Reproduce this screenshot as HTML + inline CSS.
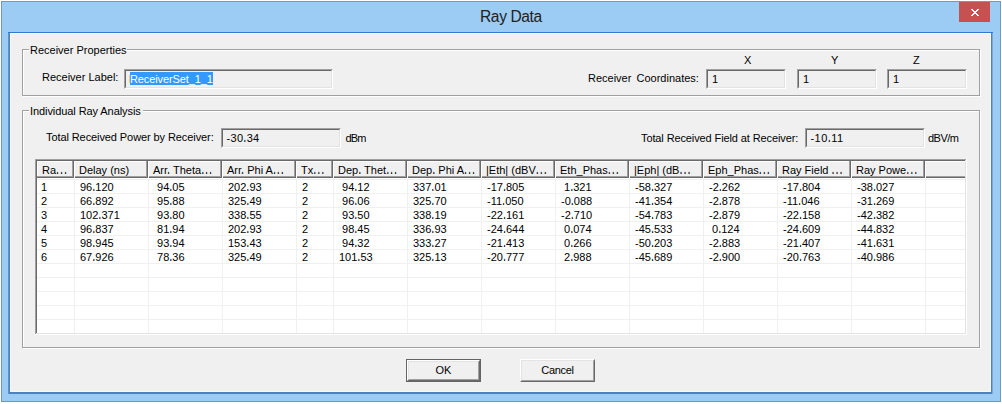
<!DOCTYPE html>
<html><head><meta charset="utf-8">
<style>
*{margin:0;padding:0;box-sizing:border-box}
html,body{width:1002px;height:404px;overflow:hidden;background:#fff}
body{position:relative;font-family:"Liberation Sans",sans-serif;font-size:11px;color:#000}
.a{position:absolute}
.t{position:absolute;white-space:pre;line-height:13px;height:13px}
#frame{left:1px;top:1px;width:1000px;height:401px;background:#9ccbf3;border:1px solid #7198bd}
#client{left:8px;top:32px;width:985px;height:362px;background:#4e82bb;border-left:1px solid #5f92c8;border-right:1px solid #78a9dc}
#ctop{left:8px;top:32px;width:985px;height:1px;background:#2e7ad2}
#cin{left:10px;top:33px;width:981px;height:359px;background:#fbf8f4}
#cbg{left:11px;top:34px;width:979px;height:357px;background:#f0f0f0}
#title{left:480px;top:7px;font-size:15.6px;line-height:19px;color:#222;white-space:pre;letter-spacing:-0.4px}
#close{left:959px;top:2px;width:31px;height:20px;background:#c75050;overflow:hidden}
.grp{position:absolute;border:1px solid #a0a0a0;box-shadow:1px 1px 0 #fff, inset 1px 1px 0 #fff}
.glab{position:absolute;background:#f0f0f0;padding:0 2px 0 2px}
.edit{position:absolute;background:#f0f0f0;border-style:solid;border-width:1px;border-color:#a0a0a0 #fff #fff #a0a0a0}
.edit::before{content:"";position:absolute;left:0;top:0;right:0;bottom:0;border-style:solid;border-width:1px;border-color:#696969 #e3e3e3 #e3e3e3 #696969}
.btn{position:absolute;background:#f0f0f0;border-style:solid;border-width:1px;border-color:#fff #696969 #696969 #fff}
.btn::before{content:"";position:absolute;left:0;top:0;right:0;bottom:0;border-style:solid;border-width:1px;border-color:#e3e3e3 #a0a0a0 #a0a0a0 #e3e3e3}
.el{letter-spacing:0.94px;text-shadow:0 -1px 0 rgba(0,0,0,.8)}
.p{text-shadow:0 -1px 0 rgba(0,0,0,.8)}
</style></head><body>
<div id="frame" class="a"></div>
<div id="client" class="a"></div>
<div id="ctop" class="a"></div>
<div id="cin" class="a"></div>
<div id="cbg" class="a"></div>
<div id="title" class="a">Ray Data</div>
<div id="close" class="a"><svg width="32" height="20" style="position:absolute;left:0;top:0" shape-rendering="crispEdges"><g fill="#fff"><rect x="12" y="7" width="1" height="1"/><rect x="13" y="7" width="1" height="1"/><rect x="18" y="7" width="1" height="1"/><rect x="19" y="7" width="1" height="1"/><rect x="13" y="8" width="1" height="1"/><rect x="14" y="8" width="1" height="1"/><rect x="17" y="8" width="1" height="1"/><rect x="18" y="8" width="1" height="1"/><rect x="14" y="9" width="1" height="1"/><rect x="15" y="9" width="1" height="1"/><rect x="16" y="9" width="1" height="1"/><rect x="17" y="9" width="1" height="1"/><rect x="15" y="10" width="1" height="1"/><rect x="16" y="10" width="1" height="1"/><rect x="14" y="11" width="1" height="1"/><rect x="15" y="11" width="1" height="1"/><rect x="16" y="11" width="1" height="1"/><rect x="17" y="11" width="1" height="1"/><rect x="13" y="12" width="1" height="1"/><rect x="14" y="12" width="1" height="1"/><rect x="17" y="12" width="1" height="1"/><rect x="18" y="12" width="1" height="1"/><rect x="12" y="13" width="1" height="1"/><rect x="13" y="13" width="1" height="1"/><rect x="18" y="13" width="1" height="1"/><rect x="19" y="13" width="1" height="1"/></g></svg></div>

<!-- group 1 -->
<div class="grp" style="left:22px;top:49px;width:958px;height:47px"></div>
<div class="t glab" style="left:29px;top:44px;width:98px;padding-left:1px">Receiver Properties</div>
<div class="t" style="left:42px;top:71px">Receiver Label:</div>
<div class="edit" style="left:124px;top:69px;width:209px;height:20px"></div>
<div class="a" style="left:130px;top:72px;width:83px;height:13px;background:#3399ff"></div>
<div class="a" style="left:129px;top:75px;width:1px;height:8px;background:#f2c77a"></div>
<div class="t" style="left:130px;top:73px;color:#fff;letter-spacing:-0.1px">ReceiverSet_1_1</div>
<div class="t" style="left:588px;top:72px;word-spacing:-0.5px">Receiver  Coordinates:</div>
<div class="t" style="left:744px;top:54px">X</div>
<div class="t" style="left:831px;top:54px">Y</div>
<div class="t" style="left:913px;top:54px">Z</div>
<div class="edit" style="left:706px;top:69px;width:80px;height:20px"></div>
<div class="edit" style="left:797px;top:69px;width:80px;height:20px"></div>
<div class="edit" style="left:887px;top:69px;width:80px;height:20px"></div>
<div class="t" style="left:712px;top:73px">1</div>
<div class="t" style="left:803px;top:73px">1</div>
<div class="t" style="left:893px;top:73px">1</div>

<!-- group 2 -->
<div class="grp" style="left:22px;top:110px;width:958px;height:238px"></div>
<div class="t glab" style="left:29px;top:105px;width:114px;padding-left:1px;letter-spacing:-0.08px">Individual Ray Analysis</div>
<div class="t" style="left:46px;top:131px;letter-spacing:-0.09px">Total Received Power by Receiver:</div>
<div class="edit" style="left:221px;top:128px;width:120px;height:20px"></div>
<div class="t" style="left:226.5px;top:132px;letter-spacing:0.3px">-30<span class="p">.</span>34</div>
<div class="t" style="left:345.5px;top:132px;letter-spacing:-0.9px">dBm</div>
<div class="t" style="left:641px;top:132px;letter-spacing:-0.11px">Total Received Field at Receiver:</div>
<div class="edit" style="left:805px;top:128px;width:120px;height:20px"></div>
<div class="t" style="left:810.5px;top:132px;letter-spacing:0.45px">-10<span class="p">.</span>11</div>
<div class="t" style="left:928px;top:132px;letter-spacing:-0.5px">dBV/m</div>

<!-- grid -->
<div class="a" style="left:35px;top:159px;width:932px;height:176px;background:#fff"></div>
<div class="a" style="left:35px;top:159px;width:931px;height:1px;background:#a0a0a0"></div>
<div class="a" style="left:35px;top:159px;width:1px;height:175px;background:#a0a0a0"></div>
<div class="a" style="left:36px;top:160px;width:929px;height:1px;background:#696969"></div>
<div class="a" style="left:36px;top:160px;width:1px;height:173px;background:#696969"></div>
<div class="a" style="left:37px;top:161px;width:37px;height:17px;background:#f0f0f0"></div>
<div class="a" style="left:37px;top:161px;width:37px;height:1px;background:#fff"></div>
<div class="a" style="left:37px;top:176px;width:37px;height:1px;background:#a0a0a0"></div>
<div class="a" style="left:37px;top:177px;width:37px;height:1px;background:#696969"></div>
<div class="a" style="left:72px;top:161px;width:1px;height:15px;background:#a0a0a0"></div>
<div class="a" style="left:73px;top:161px;width:1px;height:17px;background:#696969"></div>
<div class="a" style="left:37px;top:161px;width:1px;height:15px;background:#fff"></div>
<div class="t" style="left:42px;top:164px">Ra<span class="el">...</span></div>
<div class="a" style="left:74px;top:161px;width:74px;height:17px;background:#f0f0f0"></div>
<div class="a" style="left:74px;top:161px;width:74px;height:1px;background:#fff"></div>
<div class="a" style="left:74px;top:176px;width:74px;height:1px;background:#a0a0a0"></div>
<div class="a" style="left:74px;top:177px;width:74px;height:1px;background:#696969"></div>
<div class="a" style="left:146px;top:161px;width:1px;height:15px;background:#a0a0a0"></div>
<div class="a" style="left:147px;top:161px;width:1px;height:17px;background:#696969"></div>
<div class="a" style="left:74px;top:161px;width:1px;height:17px;background:#fff"></div>
<div class="t" style="left:79px;top:164px">Delay (ns)</div>
<div class="a" style="left:148px;top:161px;width:74px;height:17px;background:#f0f0f0"></div>
<div class="a" style="left:148px;top:161px;width:74px;height:1px;background:#fff"></div>
<div class="a" style="left:148px;top:176px;width:74px;height:1px;background:#a0a0a0"></div>
<div class="a" style="left:148px;top:177px;width:74px;height:1px;background:#696969"></div>
<div class="a" style="left:220px;top:161px;width:1px;height:15px;background:#a0a0a0"></div>
<div class="a" style="left:221px;top:161px;width:1px;height:17px;background:#696969"></div>
<div class="a" style="left:148px;top:161px;width:1px;height:17px;background:#fff"></div>
<div class="t" style="left:153px;top:164px">Arr<span class="p">.</span> Theta<span class="el">...</span></div>
<div class="a" style="left:222px;top:161px;width:74px;height:17px;background:#f0f0f0"></div>
<div class="a" style="left:222px;top:161px;width:74px;height:1px;background:#fff"></div>
<div class="a" style="left:222px;top:176px;width:74px;height:1px;background:#a0a0a0"></div>
<div class="a" style="left:222px;top:177px;width:74px;height:1px;background:#696969"></div>
<div class="a" style="left:294px;top:161px;width:1px;height:15px;background:#a0a0a0"></div>
<div class="a" style="left:295px;top:161px;width:1px;height:17px;background:#696969"></div>
<div class="a" style="left:222px;top:161px;width:1px;height:17px;background:#fff"></div>
<div class="t" style="left:227px;top:164px">Arr<span class="p">.</span> Phi A<span class="el">...</span></div>
<div class="a" style="left:296px;top:161px;width:37px;height:17px;background:#f0f0f0"></div>
<div class="a" style="left:296px;top:161px;width:37px;height:1px;background:#fff"></div>
<div class="a" style="left:296px;top:176px;width:37px;height:1px;background:#a0a0a0"></div>
<div class="a" style="left:296px;top:177px;width:37px;height:1px;background:#696969"></div>
<div class="a" style="left:331px;top:161px;width:1px;height:15px;background:#a0a0a0"></div>
<div class="a" style="left:332px;top:161px;width:1px;height:17px;background:#696969"></div>
<div class="a" style="left:296px;top:161px;width:1px;height:17px;background:#fff"></div>
<div class="t" style="left:301px;top:164px">Tx<span class="el">...</span></div>
<div class="a" style="left:333px;top:161px;width:74px;height:17px;background:#f0f0f0"></div>
<div class="a" style="left:333px;top:161px;width:74px;height:1px;background:#fff"></div>
<div class="a" style="left:333px;top:176px;width:74px;height:1px;background:#a0a0a0"></div>
<div class="a" style="left:333px;top:177px;width:74px;height:1px;background:#696969"></div>
<div class="a" style="left:405px;top:161px;width:1px;height:15px;background:#a0a0a0"></div>
<div class="a" style="left:406px;top:161px;width:1px;height:17px;background:#696969"></div>
<div class="a" style="left:333px;top:161px;width:1px;height:17px;background:#fff"></div>
<div class="t" style="left:338px;top:164px">Dep<span class="p">.</span> Thet<span class="el">...</span></div>
<div class="a" style="left:407px;top:161px;width:74px;height:17px;background:#f0f0f0"></div>
<div class="a" style="left:407px;top:161px;width:74px;height:1px;background:#fff"></div>
<div class="a" style="left:407px;top:176px;width:74px;height:1px;background:#a0a0a0"></div>
<div class="a" style="left:407px;top:177px;width:74px;height:1px;background:#696969"></div>
<div class="a" style="left:479px;top:161px;width:1px;height:15px;background:#a0a0a0"></div>
<div class="a" style="left:480px;top:161px;width:1px;height:17px;background:#696969"></div>
<div class="a" style="left:407px;top:161px;width:1px;height:17px;background:#fff"></div>
<div class="t" style="left:412px;top:164px">Dep<span class="p">.</span> Phi A<span class="el">...</span></div>
<div class="a" style="left:481px;top:161px;width:74px;height:17px;background:#f0f0f0"></div>
<div class="a" style="left:481px;top:161px;width:74px;height:1px;background:#fff"></div>
<div class="a" style="left:481px;top:176px;width:74px;height:1px;background:#a0a0a0"></div>
<div class="a" style="left:481px;top:177px;width:74px;height:1px;background:#696969"></div>
<div class="a" style="left:553px;top:161px;width:1px;height:15px;background:#a0a0a0"></div>
<div class="a" style="left:554px;top:161px;width:1px;height:17px;background:#696969"></div>
<div class="a" style="left:481px;top:161px;width:1px;height:17px;background:#fff"></div>
<div class="t" style="left:486px;top:164px">|Eth| (dBV<span class="el">...</span></div>
<div class="a" style="left:555px;top:161px;width:74px;height:17px;background:#f0f0f0"></div>
<div class="a" style="left:555px;top:161px;width:74px;height:1px;background:#fff"></div>
<div class="a" style="left:555px;top:176px;width:74px;height:1px;background:#a0a0a0"></div>
<div class="a" style="left:555px;top:177px;width:74px;height:1px;background:#696969"></div>
<div class="a" style="left:627px;top:161px;width:1px;height:15px;background:#a0a0a0"></div>
<div class="a" style="left:628px;top:161px;width:1px;height:17px;background:#696969"></div>
<div class="a" style="left:555px;top:161px;width:1px;height:17px;background:#fff"></div>
<div class="t" style="left:560px;top:164px">Eth_Phas<span class="el">...</span></div>
<div class="a" style="left:629px;top:161px;width:74px;height:17px;background:#f0f0f0"></div>
<div class="a" style="left:629px;top:161px;width:74px;height:1px;background:#fff"></div>
<div class="a" style="left:629px;top:176px;width:74px;height:1px;background:#a0a0a0"></div>
<div class="a" style="left:629px;top:177px;width:74px;height:1px;background:#696969"></div>
<div class="a" style="left:701px;top:161px;width:1px;height:15px;background:#a0a0a0"></div>
<div class="a" style="left:702px;top:161px;width:1px;height:17px;background:#696969"></div>
<div class="a" style="left:629px;top:161px;width:1px;height:17px;background:#fff"></div>
<div class="t" style="left:634px;top:164px">|Eph| (dB<span class="el">...</span></div>
<div class="a" style="left:703px;top:161px;width:74px;height:17px;background:#f0f0f0"></div>
<div class="a" style="left:703px;top:161px;width:74px;height:1px;background:#fff"></div>
<div class="a" style="left:703px;top:176px;width:74px;height:1px;background:#a0a0a0"></div>
<div class="a" style="left:703px;top:177px;width:74px;height:1px;background:#696969"></div>
<div class="a" style="left:775px;top:161px;width:1px;height:15px;background:#a0a0a0"></div>
<div class="a" style="left:776px;top:161px;width:1px;height:17px;background:#696969"></div>
<div class="a" style="left:703px;top:161px;width:1px;height:17px;background:#fff"></div>
<div class="t" style="left:708px;top:164px">Eph_Phas<span class="el">...</span></div>
<div class="a" style="left:777px;top:161px;width:74px;height:17px;background:#f0f0f0"></div>
<div class="a" style="left:777px;top:161px;width:74px;height:1px;background:#fff"></div>
<div class="a" style="left:777px;top:176px;width:74px;height:1px;background:#a0a0a0"></div>
<div class="a" style="left:777px;top:177px;width:74px;height:1px;background:#696969"></div>
<div class="a" style="left:849px;top:161px;width:1px;height:15px;background:#a0a0a0"></div>
<div class="a" style="left:850px;top:161px;width:1px;height:17px;background:#696969"></div>
<div class="a" style="left:777px;top:161px;width:1px;height:17px;background:#fff"></div>
<div class="t" style="left:782px;top:164px">Ray Field <span class="el">...</span></div>
<div class="a" style="left:851px;top:161px;width:74px;height:17px;background:#f0f0f0"></div>
<div class="a" style="left:851px;top:161px;width:74px;height:1px;background:#fff"></div>
<div class="a" style="left:851px;top:176px;width:74px;height:1px;background:#a0a0a0"></div>
<div class="a" style="left:851px;top:177px;width:74px;height:1px;background:#696969"></div>
<div class="a" style="left:923px;top:161px;width:1px;height:15px;background:#a0a0a0"></div>
<div class="a" style="left:924px;top:161px;width:1px;height:17px;background:#696969"></div>
<div class="a" style="left:851px;top:161px;width:1px;height:17px;background:#fff"></div>
<div class="t" style="left:856px;top:164px">Ray Powe<span class="el">...</span></div>
<div class="a" style="left:925px;top:161px;width:40px;height:17px;background:#f0f0f0"></div>
<div class="a" style="left:925px;top:161px;width:40px;height:1px;background:#fff"></div>
<div class="a" style="left:925px;top:176px;width:40px;height:1px;background:#a0a0a0"></div>
<div class="a" style="left:925px;top:177px;width:40px;height:1px;background:#696969"></div>
<div class="a" style="left:925px;top:161px;width:1px;height:17px;background:#fff"></div>
<div class="a" style="left:37px;top:179px;width:928px;height:1px;background:#f0f0f0"></div>
<div class="a" style="left:37px;top:193px;width:928px;height:1px;background:#f0f0f0"></div>
<div class="a" style="left:37px;top:207px;width:928px;height:1px;background:#f0f0f0"></div>
<div class="a" style="left:37px;top:221px;width:928px;height:1px;background:#f0f0f0"></div>
<div class="a" style="left:37px;top:235px;width:928px;height:1px;background:#f0f0f0"></div>
<div class="a" style="left:37px;top:249px;width:928px;height:1px;background:#f0f0f0"></div>
<div class="a" style="left:37px;top:263px;width:928px;height:1px;background:#f0f0f0"></div>
<div class="a" style="left:37px;top:277px;width:928px;height:1px;background:#f0f0f0"></div>
<div class="a" style="left:37px;top:291px;width:928px;height:1px;background:#f0f0f0"></div>
<div class="a" style="left:37px;top:305px;width:928px;height:1px;background:#f0f0f0"></div>
<div class="a" style="left:37px;top:319px;width:928px;height:1px;background:#f0f0f0"></div>
<div class="a" style="left:74px;top:178px;width:1px;height:155px;background:#f0f0f0"></div>
<div class="a" style="left:148px;top:178px;width:1px;height:155px;background:#f0f0f0"></div>
<div class="a" style="left:222px;top:178px;width:1px;height:155px;background:#f0f0f0"></div>
<div class="a" style="left:296px;top:178px;width:1px;height:155px;background:#f0f0f0"></div>
<div class="a" style="left:333px;top:178px;width:1px;height:155px;background:#f0f0f0"></div>
<div class="a" style="left:407px;top:178px;width:1px;height:155px;background:#f0f0f0"></div>
<div class="a" style="left:481px;top:178px;width:1px;height:155px;background:#f0f0f0"></div>
<div class="a" style="left:555px;top:178px;width:1px;height:155px;background:#f0f0f0"></div>
<div class="a" style="left:629px;top:178px;width:1px;height:155px;background:#f0f0f0"></div>
<div class="a" style="left:703px;top:178px;width:1px;height:155px;background:#f0f0f0"></div>
<div class="a" style="left:777px;top:178px;width:1px;height:155px;background:#f0f0f0"></div>
<div class="a" style="left:851px;top:178px;width:1px;height:155px;background:#f0f0f0"></div>
<div class="a" style="left:925px;top:178px;width:1px;height:155px;background:#f0f0f0"></div>
<div class="t" style="left:41px;top:181px">1</div>
<div class="t" style="left:80px;top:181px">96<span class="p">.</span>120</div>
<div class="t" style="left:154px;top:181px"> 94<span class="p">.</span>05</div>
<div class="t" style="left:228px;top:181px">202<span class="p">.</span>93</div>
<div class="t" style="left:302px;top:181px">2</div>
<div class="t" style="left:339px;top:181px"> 94<span class="p">.</span>12</div>
<div class="t" style="left:413px;top:181px">337<span class="p">.</span>01</div>
<div class="t" style="left:487px;top:181px">-17<span class="p">.</span>805</div>
<div class="t" style="left:561px;top:181px"> 1<span class="p">.</span>321</div>
<div class="t" style="left:635px;top:181px">-58<span class="p">.</span>327</div>
<div class="t" style="left:709px;top:181px">-2<span class="p">.</span>262</div>
<div class="t" style="left:783px;top:181px">-17<span class="p">.</span>804</div>
<div class="t" style="left:857px;top:181px">-38<span class="p">.</span>027</div>
<div class="t" style="left:41px;top:195px">2</div>
<div class="t" style="left:80px;top:195px">66<span class="p">.</span>892</div>
<div class="t" style="left:154px;top:195px"> 95<span class="p">.</span>88</div>
<div class="t" style="left:228px;top:195px">325<span class="p">.</span>49</div>
<div class="t" style="left:302px;top:195px">2</div>
<div class="t" style="left:339px;top:195px"> 96<span class="p">.</span>06</div>
<div class="t" style="left:413px;top:195px">325<span class="p">.</span>70</div>
<div class="t" style="left:487px;top:195px">-11<span class="p">.</span>050</div>
<div class="t" style="left:561px;top:195px">-0<span class="p">.</span>088</div>
<div class="t" style="left:635px;top:195px">-41<span class="p">.</span>354</div>
<div class="t" style="left:709px;top:195px">-2<span class="p">.</span>878</div>
<div class="t" style="left:783px;top:195px">-11<span class="p">.</span>046</div>
<div class="t" style="left:857px;top:195px">-31<span class="p">.</span>269</div>
<div class="t" style="left:41px;top:209px">3</div>
<div class="t" style="left:80px;top:209px">102<span class="p">.</span>371</div>
<div class="t" style="left:154px;top:209px"> 93<span class="p">.</span>80</div>
<div class="t" style="left:228px;top:209px">338<span class="p">.</span>55</div>
<div class="t" style="left:302px;top:209px">2</div>
<div class="t" style="left:339px;top:209px"> 93<span class="p">.</span>50</div>
<div class="t" style="left:413px;top:209px">338<span class="p">.</span>19</div>
<div class="t" style="left:487px;top:209px">-22<span class="p">.</span>161</div>
<div class="t" style="left:561px;top:209px">-2<span class="p">.</span>710</div>
<div class="t" style="left:635px;top:209px">-54<span class="p">.</span>783</div>
<div class="t" style="left:709px;top:209px">-2<span class="p">.</span>879</div>
<div class="t" style="left:783px;top:209px">-22<span class="p">.</span>158</div>
<div class="t" style="left:857px;top:209px">-42<span class="p">.</span>382</div>
<div class="t" style="left:41px;top:223px">4</div>
<div class="t" style="left:80px;top:223px">96<span class="p">.</span>837</div>
<div class="t" style="left:154px;top:223px"> 81<span class="p">.</span>94</div>
<div class="t" style="left:228px;top:223px">202<span class="p">.</span>93</div>
<div class="t" style="left:302px;top:223px">2</div>
<div class="t" style="left:339px;top:223px"> 98<span class="p">.</span>45</div>
<div class="t" style="left:413px;top:223px">336<span class="p">.</span>93</div>
<div class="t" style="left:487px;top:223px">-24<span class="p">.</span>644</div>
<div class="t" style="left:561px;top:223px"> 0<span class="p">.</span>074</div>
<div class="t" style="left:635px;top:223px">-45<span class="p">.</span>533</div>
<div class="t" style="left:709px;top:223px"> 0<span class="p">.</span>124</div>
<div class="t" style="left:783px;top:223px">-24<span class="p">.</span>609</div>
<div class="t" style="left:857px;top:223px">-44<span class="p">.</span>832</div>
<div class="t" style="left:41px;top:237px">5</div>
<div class="t" style="left:80px;top:237px">98<span class="p">.</span>945</div>
<div class="t" style="left:154px;top:237px"> 93<span class="p">.</span>94</div>
<div class="t" style="left:228px;top:237px">153<span class="p">.</span>43</div>
<div class="t" style="left:302px;top:237px">2</div>
<div class="t" style="left:339px;top:237px"> 94<span class="p">.</span>32</div>
<div class="t" style="left:413px;top:237px">333<span class="p">.</span>27</div>
<div class="t" style="left:487px;top:237px">-21<span class="p">.</span>413</div>
<div class="t" style="left:561px;top:237px"> 0<span class="p">.</span>266</div>
<div class="t" style="left:635px;top:237px">-50<span class="p">.</span>203</div>
<div class="t" style="left:709px;top:237px">-2<span class="p">.</span>883</div>
<div class="t" style="left:783px;top:237px">-21<span class="p">.</span>407</div>
<div class="t" style="left:857px;top:237px">-41<span class="p">.</span>631</div>
<div class="t" style="left:41px;top:251px">6</div>
<div class="t" style="left:80px;top:251px">67<span class="p">.</span>926</div>
<div class="t" style="left:154px;top:251px"> 78<span class="p">.</span>36</div>
<div class="t" style="left:228px;top:251px">325<span class="p">.</span>49</div>
<div class="t" style="left:302px;top:251px">2</div>
<div class="t" style="left:339px;top:251px">101<span class="p">.</span>53</div>
<div class="t" style="left:413px;top:251px">325<span class="p">.</span>13</div>
<div class="t" style="left:487px;top:251px">-20<span class="p">.</span>777</div>
<div class="t" style="left:561px;top:251px"> 2<span class="p">.</span>988</div>
<div class="t" style="left:635px;top:251px">-45<span class="p">.</span>689</div>
<div class="t" style="left:709px;top:251px">-2<span class="p">.</span>900</div>
<div class="t" style="left:783px;top:251px">-20<span class="p">.</span>763</div>
<div class="t" style="left:857px;top:251px">-40<span class="p">.</span>986</div>
<div class="a" style="left:965px;top:160px;width:1px;height:174px;background:#e3e3e3"></div>
<div class="a" style="left:36px;top:333px;width:930px;height:1px;background:#e3e3e3"></div>
<div class="a" style="left:966px;top:159px;width:1px;height:176px;background:#fff"></div>
<div class="a" style="left:35px;top:334px;width:932px;height:1px;background:#fff"></div>
<!-- buttons -->
<div class="a" style="left:406px;top:359px;width:75px;height:23px;background:#646464"></div>
<div class="btn" style="left:407px;top:360px;width:73px;height:21px"></div>
<div class="t" style="left:406px;top:364px;width:75px;text-align:center">OK</div>
<div class="btn" style="left:520px;top:359px;width:75px;height:23px"></div>
<div class="t" style="left:520px;top:364px;width:75px;text-align:center;letter-spacing:-0.3px">Cancel</div>
</body></html>
